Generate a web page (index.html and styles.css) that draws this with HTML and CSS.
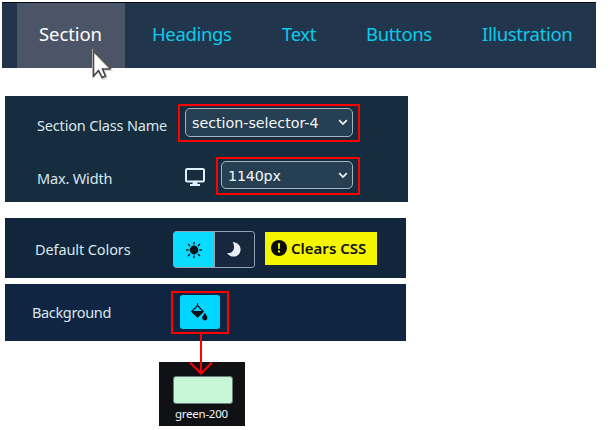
FILE: index.html
```html
<!DOCTYPE html>
<html lang="en">
<head>
<meta charset="utf-8">
<title>Section settings</title>
<link rel="stylesheet" href="styles.css">
</head>
<body>
<nav class="tabs">
  <a class="tab active">Section</a>
  <a class="tab headings">Headings</a>
  <a class="tab text">Text</a>
  <a class="tab buttons">Buttons</a>
  <a class="tab illustration">Illustration</a>
  <svg class="cursor" width="24" height="32" viewBox="0 0 24 32"><path d="M3 2V28L9 22.5L13 30L16.5 28.5L13.5 21H21Z" fill="#fff" stroke="#d5d5d5" stroke-width="2"/><path d="M3.5 28V2L21 20" fill="none" stroke="#514b49" stroke-width="1.6"/><path d="M3.5 27L8.5 21.5L12 28.5L15.5 27L12.5 20H20" fill="none" stroke="#443f43" stroke-width="1.5"/></svg>
</nav>
<main>
<section class="panel sizing">
  <div class="row">
    <span class="label class-label">Section Class Name</span>
    <div class="mark"><div class="select wide"><span class="value">section-selector-4</span><svg class="chevron" width="10" height="7" viewBox="0 0 10 7"><path d="M1.2 1.2L5 5L8.8 1.2"/></svg></div></div>
  </div>
  <div class="row">
    <span class="label width-label">Max. Width</span>
    <svg class="monitor" width="20" height="18" viewBox="0 0 20 18"><rect x="1" y="1" width="18" height="12.5" rx="1.3" fill="none" stroke="#dff1fd" stroke-width="2"/><path d="M8 14H12L12.6 16H15V18H5V16H7.4Z" fill="#dff1fd"/></svg>
    <div class="mark"><div class="select narrow"><span class="value px">1140px</span><svg class="chevron" width="10" height="7" viewBox="0 0 10 7"><path d="M1.2 1.2L5 5L8.8 1.2"/></svg></div></div>
  </div>
</section>
<section class="panel colors">
  <span class="label colors-label">Default Colors</span>
  <div class="toggle">
    <span class="light"><svg width="16" height="16" viewBox="0 0 16 16"><circle cx="8" cy="8" r="4.4" fill="#071116"/><path d="M8 0V2.5M8 13.5V16M0 8H2.5M13.5 8H16M2 2L4 4M12 12L14 14M2 14L4 12M12 4L14 2" stroke="#071116" stroke-width="1.3"/></svg></span>
    <span class="dark"><svg width="14" height="15" viewBox="0 0 14 15"><path d="M5.5 0C10 .2 13.6 3.2 13.6 7.5C13.6 11.7 10.5 14.6 6.5 14.6C3.8 14.6 1.4 13.1 .2 11C4.2 11.5 7 8.8 7 5.2C7 3.1 6.6 1.4 5.5 0Z" fill="#e8eef5"/></svg></span>
  </div>
  <div class="notice"><svg width="16" height="16" viewBox="0 0 16 16"><circle cx="8" cy="8" r="8" fill="#0b0b05"/><path d="M6.9 3.2H9.1L8.8 9H7.2Z" fill="#f4f600"/><circle cx="8" cy="11.5" r="1.15" fill="#f4f600"/></svg><b>Clears CSS</b></div>
</section>
<section class="panel background">
  <span class="label bg-label">Background</span>
  <div class="mark fill-mark"><div class="fill"><svg width="18" height="18" viewBox="0 0 18 18"><path d="M7.5 0V3M7.5 2.5L13.3 8.5L7.5 14L1.7 8.5Z" fill="none" stroke="#061116" stroke-width="1.2"/><path d="M1 8H14L7.5 14.8Z" fill="#061116"/><path d="M14.8 9.8C15.5 11.8 17.4 13 17.4 14.8C17.4 16.4 16.3 17.5 14.8 17.5S12.2 16.4 12.2 14.8C12.2 13 14.1 11.8 14.8 9.8Z" fill="#061116"/></svg></div></div>
</section>
<figure class="swatch-card">
  <div class="swatch"></div>
  <figcaption>green-200</figcaption>
  <svg class="arrow" width="26" height="42" viewBox="0 0 26 42"><path d="M13 0V40M2 28.5L13 39.5L24 28.5" fill="none" stroke="#f00" stroke-width="2"/></svg>
</figure>
</main>
</body>
</html>
```
FILE: styles.css
```css
* { box-sizing: border-box; }
body {
  margin: 0;
  padding: 2px 0 0;
  background: #fff;
  font-family: "Noto Sans", "Open Sans", sans-serif;
}
svg { display: block; flex: none; }
.tabs {
  position: relative;
  display: flex;
  width: 594px;
  height: 66px;
  margin-left: 2px;
  padding-left: 15px;
  border-top: 1px solid #05090d;
  background: #21364d;
}
.tab {
  flex: none;
  padding: 17px 0 0 22px;
  color: #0ccbea;
  font-size: 18.5px;
  line-height: 27px;
  letter-spacing: -.35px;
  white-space: nowrap;
}
.tab.active { width: 108px; margin-right: 5px; background: #4c5568; color: #fff; letter-spacing: -.1px; }
.headings { width: 130px; }
.text { width: 84px; }
.buttons { width: 116px; }
.cursor { position: absolute; left: 88px; top: 46px; }
main { padding: 28px 0 0 5px; }
.panel { background: #162d3f; }
.label {
  flex: none;
  color: #d9e6ee;
  font-size: 14.5px;
  line-height: 20px;
  letter-spacing: -.17px;
  white-space: nowrap;
}
.sizing {
  display: flex;
  flex-direction: column;
  gap: 15px;
  width: 403px;
  height: 106px;
  padding: 8px 0 0 32px;
}
.row { display: flex; align-items: flex-start; }
.class-label { width: 141px; padding-top: 11px; }
.width-label { width: 148px; padding-top: 11px; }
.mark { flex: none; height: 38px; padding: 2px 5px; border: 2px solid #f00; }
.select {
  display: flex;
  align-items: center;
  justify-content: space-between;
  height: 29px;
  padding: 0 4px 0 6px;
  border: 1px solid #a4b5c1;
  border-radius: 5px;
  background: #263f52;
  color: #f4f8fa;
  font-family: "DejaVu Sans", sans-serif;
  font-size: 14.3px;
}
.wide { width: 168px; }
.narrow { width: 132px; margin-left: -2px; height: 28px; }
.value { line-height: 24px; letter-spacing: -.03px; white-space: nowrap; }
.px { padding-top: 1px; letter-spacing: -.2px; }
.chevron path { fill: none; stroke: #f1f6f8; stroke-width: 1.7; }
.monitor { margin: 11px 11px 0 0; }
.colors {
  display: flex;
  width: 401px;
  height: 60px;
  margin-top: 16px;
  padding-left: 30px;
  background: #11263a;
}
.colors-label { width: 138px; padding-top: 21px; letter-spacing: -.1px; }
.toggle {
  display: flex;
  width: 82px;
  height: 37px;
  margin-top: 13px;
  border: 1px solid #93a1b5;
  border-radius: 4px;
  overflow: hidden;
  background: linear-gradient(90deg, #0bdcff 50%, #17283e 50%);
  border-left-color: #0bdcff;
}
.toggle span { display: flex; align-items: center; justify-content: center; }
.light { width: 40px; background: #0bdcff; }
.dark { flex: 1; padding-right: 1px; border-left: 1px solid #93a1b5; background: #17283e; }
.notice {
  display: flex;
  align-items: center;
  gap: 4px;
  width: 112px;
  height: 33px;
  margin: 14px 0 0 10px;
  padding-left: 6px;
  background: #f4f600;
  color: #111106;
  font-size: 15px;
  white-space: nowrap;
}
.notice svg { margin-top: -2px; }
.notice b { margin-top: -2px; font-weight: 600; letter-spacing: 0; }
.background {
  display: flex;
  width: 401px;
  height: 57px;
  margin-top: 6px;
  padding: 7px 0 0 27px;
  background: #102542;
}
.bg-label { width: 139px; padding-top: 11px; letter-spacing: -.35px; }
.fill-mark { width: 58px; height: 43px; padding: 2px 7px; }
.fill {
  display: flex;
  align-items: center;
  justify-content: center;
  width: 40px;
  height: 34px;
  border-radius: 3px;
  background: #00d6ff;
}
.fill svg { margin-left: -3px; }
.swatch-card {
  position: relative;
  width: 86px;
  height: 64px;
  margin: 21px 0 0 154px;
  padding: 14px 12px 0 14px;
  background: #101114;
}
.swatch { height: 28px; border: 1px solid #697f78; border-radius: 3px; background: #c6f6d5; }
figcaption {
  margin: 1px 0 0 2px;
  color: #f4f4f6;
  font-size: 11.5px;
  line-height: 18px;
  letter-spacing: -.25px;
  white-space: nowrap;
}
.arrow { position: absolute; left: 29px; top: -28px; }
```
